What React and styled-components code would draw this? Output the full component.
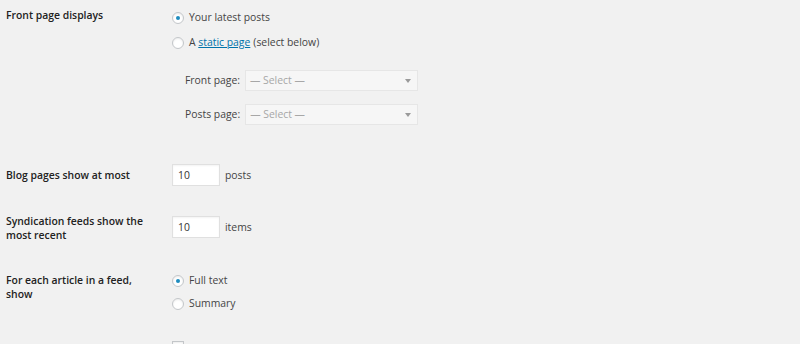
import styled, { createGlobalStyle } from "styled-components"

const Global = createGlobalStyle`
  html, body {
    margin: 0;
    padding: 0;
    background: #f1f1f1;
  }
  body {
    font-family: "Open Sans", "Noto Sans", sans-serif;
    font-size: 10.4px;
    line-height: 15px;
    color: #444;
  }
`

const Page = styled.div`
  width: 800px;
  height: 344px;
  overflow: hidden;
  padding-left: 6px;
  box-sizing: border-box;
`

const Row = styled.div`
  display: grid;
  grid-template-columns: 166px 1fr;
  align-items: start;
  margin-top: ${p => p.$top}px;
`

const Th = styled.div`
  font-weight: 600;
  color: #222;
  line-height: 14px;
  padding-top: ${p => p.$pad || 0}px;
  width: 150px;
`

const Td = styled.div`
  padding-top: ${p => p.$pad || 0}px;
  display: flex;
  flex-direction: column;
  gap: ${p => p.$gap || 0}px;
`

const Option = styled.label`
  display: flex;
  align-items: center;
  gap: 5px;
  height: 15px;
`

const Radio = styled.span`
  width: 12px;
  height: 12px;
  border-radius: 50%;
  box-sizing: border-box;
  border: 1px solid #c3c6c9;
  background: #fff;
  box-shadow: inset 0 1px 2px rgba(0, 0, 0, 0.08);
  display: flex;
  align-items: center;
  justify-content: center;
  flex-shrink: 0;
  &::after {
    content: "";
    display: ${p => (p.$checked ? "block" : "none")};
    width: 4px;
    height: 4px;
    border-radius: 50%;
    background: #1e8cbe;
  }
`

const Check = styled.span`
  width: 12px;
  height: 12px;
  box-sizing: border-box;
  border: 1px solid #c3c6c9;
  background: #fff;
  box-shadow: inset 0 1px 2px rgba(0, 0, 0, 0.08);
`

const StaticLink = styled.a`
  color: #0073aa;
  text-decoration: underline;
  margin-right: 3px;
`

const SubList = styled.div`
  margin-top: 10px;
  padding-left: 13px;
  display: flex;
  flex-direction: column;
  gap: 13px;
`

const SubRow = styled.div`
  display: flex;
  align-items: center;
  gap: 5px;
  height: 21px;
`

const Select = styled.div`
  width: 173px;
  height: 21px;
  box-sizing: border-box;
  border: 1px solid #e6e6e6;
  background: #f6f6f6;
  display: flex;
  align-items: center;
  justify-content: space-between;
  padding: 0 6px 0 4px;
  color: #a7a7a7;
`

const Arrow = styled.span`
  width: 0;
  height: 0;
  border-left: 3px solid transparent;
  border-right: 3px solid transparent;
  border-top: 4px solid #9a9a9a;
`

const InputLine = styled.div`
  display: flex;
  align-items: center;
  gap: 5px;
`

const NumberBox = styled.div`
  width: 48px;
  height: 22px;
  box-sizing: border-box;
  border: 1px solid #e0e0e0;
  background: #fff;
  box-shadow: inset 0 1px 2px rgba(0, 0, 0, 0.05);
  padding-left: 5px;
  display: flex;
  align-items: center;
  color: #333;
`

export default function App() {
  return (
    <>
      <Global />
      <Page>
        <Row $top={0}>
          <Th $pad={8}>Front page displays</Th>
          <Td $pad={10} $gap={10}>
            <Option>
              <Radio $checked />
              Your latest posts
            </Option>
            <Option>
              <Radio />
              <span>
                A <StaticLink>static page</StaticLink>(select below)
              </span>
            </Option>
            <SubList>
              <SubRow>
                Front page:
                <Select>
                  — Select —
                  <Arrow />
                </Select>
              </SubRow>
              <SubRow>
                Posts page:
                <Select>
                  — Select —
                  <Arrow />
                </Select>
              </SubRow>
            </SubList>
          </Td>
        </Row>

        <Row $top={39}>
          <Th $pad={4}>Blog pages show at most</Th>
          <Td>
            <InputLine>
              <NumberBox>10</NumberBox>
              posts
            </InputLine>
          </Td>
        </Row>

        <Row $top={27}>
          <Th $pad={1}>Syndication feeds show the most recent</Th>
          <Td $pad={3}>
            <InputLine>
              <NumberBox>10</NumberBox>
              items
            </InputLine>
          </Td>
        </Row>

        <Row $top={30}>
          <Th $pad={1}>For each article in a feed, show</Th>
          <Td $pad={1} $gap={8}>
            <Option>
              <Radio $checked />
              Full text
            </Option>
            <Option>
              <Radio />
              Summary
            </Option>
          </Td>
        </Row>

        <Row $top={30}>
          <Th />
          <Td>
            <Check />
          </Td>
        </Row>
      </Page>
    </>
  )
}
